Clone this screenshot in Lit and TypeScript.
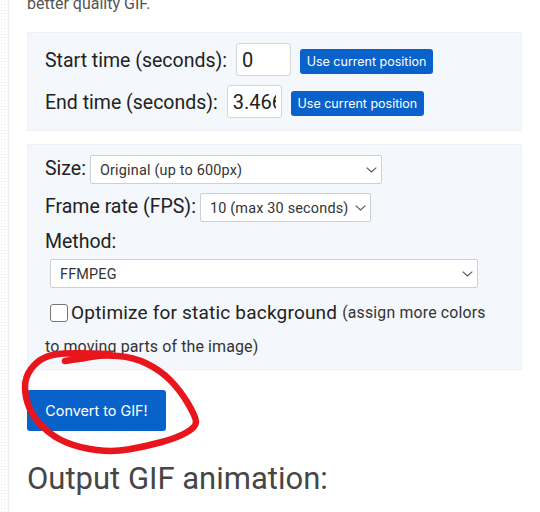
import { LitElement, html, css, svg } from 'lit';
import { customElement } from 'lit/decorators.js';

// hand-traced centre line of the red marker scribble
const scribble: [number, number][] = [
  [65, 361], [85, 358], [103, 355], [133, 357], [160, 370], [180, 390], [196, 417], [196, 427],
  [177, 438], [143, 447], [113, 452], [80, 448], [53, 437], [33, 417], [25, 397],
  [25, 377], [37, 361], [53, 354], [75, 353], [110, 354],
];

function smoothPath(pts: [number, number][]): string {
  let d = `M${pts[0][0]} ${pts[0][1]}`;
  for (let i = 1; i < pts.length - 1; i++) {
    const mx = (pts[i][0] + pts[i + 1][0]) / 2;
    const my = (pts[i][1] + pts[i + 1][1]) / 2;
    d += ` Q${pts[i][0]} ${pts[i][1]} ${mx} ${my}`;
  }
  const last = pts[pts.length - 1];
  return d + ` L${last[0]} ${last[1]}`;
}

const chevron = html`<svg class="chevron" width="11" height="6" viewBox="0 0 11 6" aria-hidden="true">
  <path d="M0.7 0.7 L5.5 5 L10.3 0.7" fill="none" stroke="#555" stroke-width="1.1" />
</svg>`;

@customElement('app-root')
export class AppRoot extends LitElement {
  static styles = css`
    :host {
      display: block;
      position: relative;
      width: 540px;
      height: 512px;
      overflow: hidden;
      background: #fff;
      font-family: Roboto, sans-serif;
      color: #222;
    }

    .page {
      height: 512px;
      box-sizing: border-box;
      margin-left: 8px;
      padding: 0 18px 0 18px;
      border-left: 1px solid #eeeeee;
      overflow: hidden;
    }

    .gutter {
      position: absolute;
      left: 0;
      top: 0;
      width: 8px;
      height: 512px;
      background-image: radial-gradient(#ececec 0.6px, transparent 0.7px);
      background-size: 3px 3px;
    }

    .intro {
      margin: -6px 0 0;
      height: 38px;
      font-size: 16px;
      line-height: 20px;
      color: #555;
    }

    .panel {
      background: #f4f7fb;
      border: 1px solid #edf0f4;
      padding: 10px 17px;
      box-sizing: border-box;
    }

    .times {
      height: 99px;
      display: flex;
      flex-direction: column;
      gap: 9px;
    }

    .times label { padding-top: 2px; }

    .options {
      height: 226px;
      margin-top: 13px;
      display: flex;
      flex-direction: column;
      align-items: flex-start;
    }

    .row {
      display: flex;
      align-items: center;
      font-size: 19.5px;
    }

    .row label { white-space: nowrap; }

    input[type='text'] {
      box-sizing: border-box;
      height: 33px;
      padding: 0 5px;
      border: 1px solid #d6d6d6;
      border-radius: 3px;
      background: #fff;
      font: 20px Roboto, sans-serif;
      color: #222;
      outline: none;
    }

    .start { width: 55px; margin-left: 9px; }
    .end { width: 55px; margin-left: 9px; }

    .use {
      margin: 4px 0 0 9px;
      width: 133px;
      height: 25px;
      padding: 0;
      border: none;
      border-radius: 3px;
      background: #0862c9;
      color: #fff;
      font: 12.5px Inter, Roboto, sans-serif;
    }

    .select {
      position: relative;
      display: block;
      height: 29px;
    }

    .select select {
      appearance: none;
      display: block;
      box-sizing: border-box;
      width: 100%;
      height: 100%;
      padding: 2px 0 0 9px;
      border: 1px solid #cfcfcf;
      border-radius: 2px;
      background: #fff;
      font: 14.4px Roboto, sans-serif;
      letter-spacing: 0.2px;
      color: #333;
    }

    .chevron {
      position: absolute;
      right: 5px;
      top: 12px;
    }

    .size { width: 292px; margin-left: 4px; }
    .fps { width: 171px; margin-left: 4px; }
    .method { width: 428px; margin: 6px 0 0 5px; }

    .size-row label,
    .fps-row label { padding-bottom: 2px; }

    .fps-row { margin-top: 9px; }
    .method-row { margin-top: 6px; }
    .method-row label { padding-top: 2px; }

    .static {
      margin: 14px 0 0 5px;
      font-size: 19px;
      letter-spacing: 0.2px;
      line-height: 22px;
      white-space: nowrap;
      display: flex;
      align-items: center;
    }

    .box {
      width: 18px;
      height: 18px;
      box-sizing: border-box;
      border: 1px solid #777;
      border-radius: 3px;
      background: #fff;
      margin-right: 3px;
    }

    .static small {
      font-size: 15.8px;
      letter-spacing: 0.2px;
      margin-left: 5px;
      color: #333;
    }

    .more {
      margin-top: 12px;
      font-size: 16px;
      letter-spacing: 0.1px;
      line-height: 22px;
      color: #333;
    }

    .convert {
      display: block;
      margin-top: 20px;
      width: 139px;
      height: 41px;
      padding: 0;
      border: none;
      border-radius: 3px;
      background: #0862c9;
      color: #fff;
      font: 14.4px Inter, Roboto, sans-serif;
    }

    h2 {
      margin: 29px 0 0;
      font-size: 31px;
      line-height: 38px;
      font-weight: 400;
      color: #464646;
    }

    .scribble {
      position: absolute;
      left: 0;
      top: 0;
      pointer-events: none;
    }
  `;

  render() {
    return html`
      <div class="gutter"></div>
      <div class="page">
        <p class="intro">better quality GIF.</p>

        <div class="panel times">
          <div class="row">
            <label>Start time (seconds):</label>
            <input class="start" type="text" .value=${'0'} />
            <button class="use">Use current position</button>
          </div>
          <div class="row">
            <label>End time (seconds):</label>
            <input class="end" type="text" .value=${'3.466'} />
            <button class="use">Use current position</button>
          </div>
        </div>

        <div class="panel options">
          <div class="row size-row">
            <label>Size:</label>
            <span class="select size">
              <select><option>Original (up to 600px)</option></select>
              ${chevron}
            </span>
          </div>
          <div class="row fps-row">
            <label>Frame rate (FPS):</label>
            <span class="select fps">
              <select><option>10 (max 30 seconds)</option></select>
              ${chevron}
            </span>
          </div>
          <div class="row method-row"><label>Method:</label></div>
          <span class="select method">
            <select><option>FFMPEG</option></select>
            ${chevron}
          </span>
          <div class="static">
            <span class="box"></span>Optimize for static background
            <small>(assign more colors</small>
          </div>
          <div class="more">to moving parts of the image)</div>
        </div>

        <button class="convert">Convert to GIF!</button>
        <h2>Output GIF animation:</h2>
      </div>

      <svg class="scribble" width="540" height="512" aria-hidden="true">
        ${svg`<path d=${smoothPath(scribble)} fill="none" stroke="#e9151d" stroke-width="6.5" stroke-linecap="round" stroke-linejoin="round" />`}
      </svg>
    `;
  }
}
